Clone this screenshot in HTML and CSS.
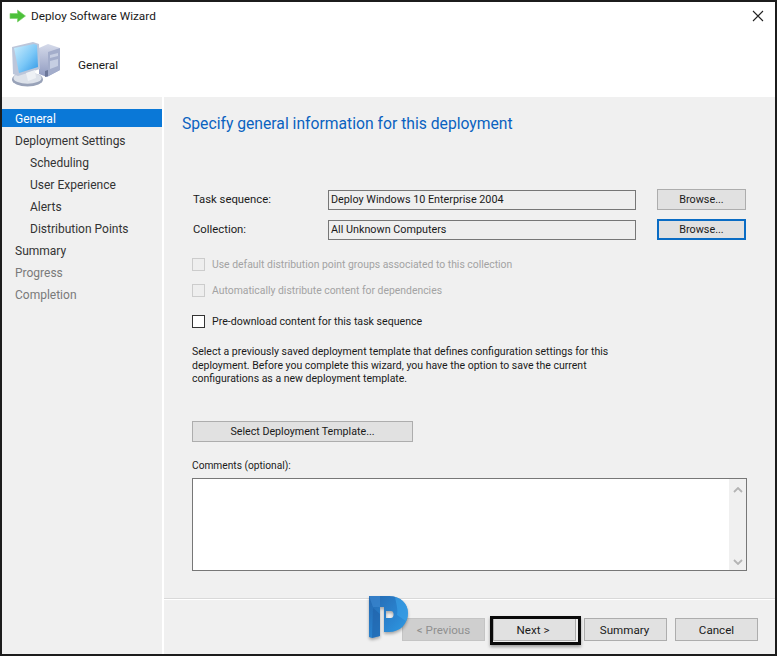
FILE: index.html
```html
<!DOCTYPE html>
<html lang="en">
<head>
<meta charset="utf-8">
<title>Deploy Software Wizard</title>
<link rel="stylesheet" href="styles.css">
</head>
<body>
<div class="window">
  <div class="titlebar">
    <svg class="arrow" width="18" height="14" viewBox="0 0 18 14"><path d="M1 4.500h7.500V1l8 6-8 6V9.500H1z" fill="#4cc13a" stroke="#7bd069" stroke-width=".6"/></svg>
    <span class="title">Deploy Software Wizard</span>
    <svg class="close" width="12" height="12" viewBox="0 0 12 12"><path d="M1 1l10 10M11 1L1 11" stroke="#222" stroke-width="1.100" fill="none"/></svg>
  </div>
  <div class="header">
    <svg class="pc" width="50" height="48" viewBox="0 0 50 48">
      <defs>
        <linearGradient id="scr" x1="0" y1="0" x2="1" y2="1"><stop offset="0" stop-color="#cdeefd"/><stop offset=".55" stop-color="#7cc8f7"/><stop offset="1" stop-color="#2f97e6"/></linearGradient>
        <linearGradient id="twr" x1="0" y1="0" x2="0" y2="1"><stop offset="0" stop-color="#d5daea"/><stop offset="1" stop-color="#8f9ac0"/></linearGradient>
      </defs>
      <path d="M28 8l9-4 12 4v22l-13 7-8-3z" fill="url(#twr)"/>
      <path d="M37 12l12-4v22l-12 6z" fill="#a3adcb"/>
      <path d="M39 15l8-2v3l-8 2zM39 21l8-2v7l-8 3z" fill="#c6cee2"/>
      <path d="M34 31l3-1v6l-3 1z" fill="#6c7799"/>
      <ellipse cx="16.500" cy="39.500" rx="15.500" ry="7" fill="#98a2b8"/>
      <ellipse cx="16.500" cy="38" rx="14" ry="5.800" fill="#dde2ea"/>
      <path d="M1 7l21-5 6 2 1 25-22 7-5-2z" fill="#bcc6da"/>
      <path d="M3 8l20-4 3 1 1 22-19 6z" fill="url(#scr)"/>
      <path d="M15 33l9-3 1 8-8 3z" fill="#eef1f5"/>
    </svg>
    <span class="header-label">General</span>
  </div>
  <div class="body">
    <nav class="sidebar">
      <div class="nav-item active">General</div>
      <div class="nav-item">Deployment Settings</div>
      <div class="nav-item sub">Scheduling</div>
      <div class="nav-item sub">User Experience</div>
      <div class="nav-item sub">Alerts</div>
      <div class="nav-item sub">Distribution Points</div>
      <div class="nav-item">Summary</div>
      <div class="nav-item muted">Progress</div>
      <div class="nav-item muted">Completion</div>
    </nav>
    <main class="main">
      <div class="content">
        <h1 class="heading">Specify general information for this deployment</h1>
        <div class="form-row first">
          <span class="label">Task sequence:</span>
          <div class="field">Deploy Windows 10 Enterprise 2004</div>
          <div class="btn browse">Browse...</div>
        </div>
        <div class="form-row second">
          <span class="label">Collection:</span>
          <div class="field">All Unknown Computers</div>
          <div class="btn browse focus">Browse...</div>
        </div>
        <label class="check disabled c1"><span class="box"></span>Use default distribution point groups associated to this collection</label>
        <label class="check disabled c2"><span class="box"></span>Automatically distribute content for dependencies</label>
        <label class="check c3"><span class="box"></span>Pre-download content for this task sequence</label>
        <p class="desc">Select a previously saved deployment template that defines configuration settings for this<br>deployment. Before you complete this wizard, you have the option to save the current<br>configurations as a new deployment template.</p>
        <div class="btn template">Select Deployment Template...</div>
        <div class="comments-label">Comments (optional):</div>
        <div class="comments">
          <div class="scrollbar">
            <svg width="10" height="6" viewBox="0 0 10 6"><path d="M1 5l4-4 4 4" stroke="#b4b4b4" stroke-width="1.800" fill="none"/></svg>
            <svg width="10" height="6" viewBox="0 0 10 6"><path d="M1 1l4 4 4-4" stroke="#b4b4b4" stroke-width="1.800" fill="none"/></svg>
          </div>
        </div>
      </div>
      <div class="footer">
        <div class="btn disabled-btn">&lt; Previous</div>
        <div class="btn next">Next &gt;</div>
        <div class="btn summary">Summary</div>
        <div class="btn">Cancel</div>
        <svg class="logo" width="41" height="46" viewBox="0 0 41 46">
          <defs>
            <linearGradient id="lg" x1="0" y1="0" x2="1" y2="1"><stop offset="0" stop-color="#2568b0"/><stop offset=".6" stop-color="#2a86d2"/><stop offset="1" stop-color="#2f9fe6"/></linearGradient>
          </defs>
          <path fill-rule="evenodd" fill="url(#lg)" d="M0 0H20C32 0 39 8 39 17C39 28 31 36 20 36H15V11H11V40L3 42L0 41ZM17 15h5c3.500 0 3.500 7 0 7h-5z"/>
          <path d="M0 0H11V11H4z" fill="#3a86cf" opacity=".7"/>
          <path d="M4 12l7 6v22l-8 2z" fill="#1f5ea6" opacity=".55"/>
          <path d="M26 1c8 2 13 8 13 16 0 3-1 6-2 8l-9-6c1-5 0-8-2-18z" fill="#3aa4ea" opacity=".6"/>
        </svg>
      </div>
    </main>
  </div>
</div>
</body>
</html>
```
FILE: styles.css
```css
* { box-sizing: border-box; }
html, body { margin: 0; padding: 0; }
body {
  width: 777px;
  height: 656px;
  font-family: Roboto, "Noto Sans", sans-serif;
  font-size: 12px;
  color: #1a1a1a;
  background: #fff;
}
.window {
  width: 777px;
  height: 656px;
  border: 2px solid #1c1c1c;
  display: flex;
  flex-direction: column;
  background: #fff;
}
.titlebar {
  height: 28px;
  display: flex;
  align-items: center;
  padding: 0 10px 0 7px;
  gap: 4px;
  flex: none;
}
.title { font-size: 11.800px; flex: 1; }
.close { margin-right: 1px; }
.header {
  height: 67px;
  flex: none;
  display: flex;
  align-items: center;
  padding: 0 0 0 9px;
  background: #fff;
}
.header-label { margin-left: 17px; padding-top: 3px; font-size: 11.800px; }
.body { flex: 1; display: flex; background: #fff; min-height: 0; }
.sidebar {
  width: 160px;
  flex: none;
  background: #f0f0f0;
  padding-top: 12px;
  margin-right: 2px;
}
.nav-item {
  height: 18px;
  margin-bottom: 4px;
  padding: 1px 0 0 13px;
  line-height: 18px;
  font-size: 12px;
  color: #333;
}
.nav-item.sub { padding-left: 28px; }
.nav-item.active { background: #0a78d7; color: #fff; }
.nav-item.muted { color: #7a7a7a; }
.main {
  flex: 1;
  background: #f0f0f0;
  display: flex;
  flex-direction: column;
  min-width: 0;
}
.content { flex: 1; padding: 15px 29px 0 18px; border-bottom: 1px solid #d9d9d9; box-shadow: 0 1px 0 #fff; }
.heading { margin: 0; font-size: 15.700px; font-weight: 400; line-height: 24px; color: #0a62c0; }
.form-row { display: flex; align-items: center; height: 21px; padding-left: 11px; }
.form-row.first { margin-top: 53px; }
.form-row.second { margin-top: 9px; }
.label { width: 135px; flex: none; font-size: 11.300px; }
.field {
  width: 308px;
  height: 20px;
  border: 1px solid #777;
  background: #efefef;
  padding-left: 2px;
  line-height: 18px;
  font-size: 10.800px;
}
.btn {
  width: 88px;
  height: 24px;
  display: flex;
  align-items: center;
  justify-content: center;
  background: #e1e1e1;
  border: 1px solid #adadad;
  font-size: 11.600px;
}
.browse { width: 89px; height: 21px; margin-left: 21px; font-size: 10.800px; }
.browse.focus { border: 2px solid #0a6cc4; }
.check { display: flex; align-items: center; height: 18px; margin-left: 10px; font-size: 10.400px; gap: 7px; }
.check.c3 { font-size: 10.600px; }
.check .box { width: 13px; height: 13px; background: #fff; border: 1px solid #333; flex: none; }
.check.disabled { color: #a3a3a3; }
.check.disabled .box { background: #eee; border-color: #ccc; }
.c1 { margin-top: 15px; }
.c2 { margin-top: 8px; }
.c3 { margin-top: 13px; }
.desc { margin: 15px 0 0 10px; font-size: 10.500px; line-height: 13.500px; white-space: nowrap; }
.btn.template { width: 221px; height: 21px; margin: 35px 0 0 10px; font-size: 10.700px; }
.comments-label { margin: 16px 0 0 10px; font-size: 10.200px; line-height: 15px; }
.comments {
  margin: 5px 0 0 10px;
  width: 555px;
  height: 93px;
  background: #fff;
  border: 1px solid #777;
  display: flex;
  justify-content: flex-end;
}
.scrollbar {
  width: 17px;
  background: #f0f0f0;
  display: flex;
  flex-direction: column;
  justify-content: space-between;
  align-items: center;
  padding: 8px 0 5px;
}
.footer {
  height: 55px;
  flex: none;
  display: flex;
  justify-content: flex-end;
  align-items: flex-start;
  gap: 8px;
  padding: 19px 17px 0 0;
  position: relative;
}
.footer .btn { width: 83px; height: 23px; }
.disabled-btn { color: #8f8f8f; background: #cfcfcf !important; border-color: #c4c4c4 !important; }
.btn.next { position: relative; padding-right: 3px; }
.btn.summary { padding-right: 2px; }
.btn.next::after {
  content: "";
  position: absolute;
  inset: -3px -6px -5px -4px;
  border: 3px solid #0a0a0a;
  box-shadow: 0 2px 3px rgba(0,0,0,.35);
}
.logo { position: absolute; left: 205px; top: -3px; filter: drop-shadow(0 2px 1.500px rgba(0,0,0,.3)); }
```
